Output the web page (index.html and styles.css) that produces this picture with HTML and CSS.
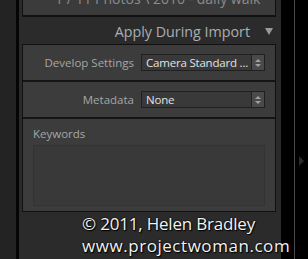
FILE: index.html
```html
<!DOCTYPE html>
<html>
<head>
    <title>Apply During Import</title>
    <link rel="stylesheet" href="styles.css">
</head>
<body>
    <div class="left"></div>
    <div class="rule"></div>
    <div class="panel">
        <div class="top-box">
            <div class="top-text">1 / 11 Photos \ 2010 - daily walk</div>
        </div>
        <div class="header">
            <span class="header-title">Apply During Import</span>
            <span class="header-arrow"></span>
        </div>
        <div class="box">
            <div class="row">
                <span class="label">Develop Settings</span>
                <div class="select">
                    <span class="select-value">Camera Standard ...</span>
                    <span class="stepper"><span class="up"></span><span class="down"></span></span>
                </div>
            </div>
            <div class="row">
                <span class="label">Metadata</span>
                <div class="select">
                    <span class="select-value">None</span>
                    <span class="stepper"><span class="up"></span><span class="down"></span></span>
                </div>
            </div>
            <div class="keywords">
                <div class="kw-label">Keywords</div>
                <div class="kw-area"></div>
            </div>
        </div>
    </div>
    <div class="gutter">
        <div class="gutter-line"></div>
        <div class="gutter-arrow"></div>
    </div>
    <div class="watermark">
        <div class="wm-copy">&copy; 2011, Helen Bradley</div>
        <div class="wm-site">www.projectwoman.com</div>
    </div>
</body>
</html>
```

FILE: styles.css
```css
body {
    margin: 0;
    width: 308px;
    height: 259px;
    overflow: hidden;
    display: flex;
    background-color: #222;
    font-family: "Open Sans", "DejaVu Sans", sans-serif;
    position: relative;
}
.left {
    width: 16px;
    background-color: #232323;
}
.rule {
    width: 3px;
    background-color: #050505;
}
.panel {
    width: 254px;
    padding: 0 5px 0 3px;
    background-color: #2b2b2b;
}
.top-box {
    height: 17px;
    box-sizing: border-box;
    background-color: #3b3b3b;
    border: 1px solid #111;
    border-top: none;
    border-bottom-width: 2px;
    overflow: hidden;
}
.top-text {
    margin-top: -11px;
    padding-left: 32px;
    font-size: 14px;
    color: #8c8c8c;
    white-space: nowrap;
}
.header {
    height: 27px;
    display: flex;
    align-items: center;
    justify-content: flex-end;
    padding-right: 3px;
}
.header-title {
    font-size: 14.3px;
    color: #a9aeb3;
    margin-right: 15px;
    margin-top: 2px;
}
.header-arrow {
    width: 0;
    height: 0;
    border-left: 4px solid transparent;
    border-right: 4px solid transparent;
    border-top: 7px solid #9a9a9a;
    margin-top: 2px;
}
.box {
    border: 1px solid #111;
    background-color: #3c3c3c;
}
.row {
    height: 35px;
    display: flex;
    align-items: center;
    border-bottom: 2px solid #151515;
}
.label {
    width: 111px;
    text-align: right;
    font-size: 11.5px;
    color: #a6a6a6;
}
.select {
    margin-left: 7px;
    width: 124px;
    height: 17px;
    box-sizing: border-box;
    border: 1px solid #202020;
    background-color: #393939;
    display: flex;
}
.select-value {
    flex: 1;
    font-size: 11.5px;
    letter-spacing: -0.2px;
    line-height: 15px;
    color: #e2e2e2;
    padding-left: 4px;
    white-space: nowrap;
    overflow: hidden;
}
.stepper {
    width: 12px;
    border-left: 1px solid #222;
    background-color: #4a4a4a;
    display: flex;
    flex-direction: column;
    align-items: center;
    justify-content: center;
    gap: 2px;
}
.up, .down {
    width: 0;
    height: 0;
    border-left: 3px solid transparent;
    border-right: 3px solid transparent;
}
.up {
    border-bottom: 3px solid #a0a0a0;
}
.down {
    border-top: 3px solid #a0a0a0;
}
.keywords {
    height: 92px;
    padding: 7px 10px 0 10px;
    box-sizing: border-box;
}
.kw-label {
    font-size: 11.5px;
    color: #a6a6a6;
    height: 19px;
}
.kw-area {
    height: 59px;
    background-color: #393939;
    border: 1px solid #333;
}
.gutter {
    flex: 1;
    background-color: #000;
    position: relative;
}
.gutter-line {
    position: absolute;
    left: 13px;
    top: 0;
    bottom: 0;
    width: 1px;
    background-color: #4a4a4a;
}
.gutter-arrow {
    position: absolute;
    left: 18px;
    top: 156px;
    width: 0;
    height: 0;
    border-top: 5px solid transparent;
    border-bottom: 5px solid transparent;
    border-left: 5px solid #2a2a2a;
}
.watermark {
    position: absolute;
    left: 82px;
    top: 213px;
    font-family: "Open Sans", sans-serif;
    font-size: 17px;
    line-height: 22px;
    color: #f2f2f2;
    text-shadow: 1px 1px 1px #000, 0 0 2px #000;
}
.wm-copy {
    letter-spacing: -0.2px;
}
.wm-site {
    letter-spacing: 0.55px;
}
```
